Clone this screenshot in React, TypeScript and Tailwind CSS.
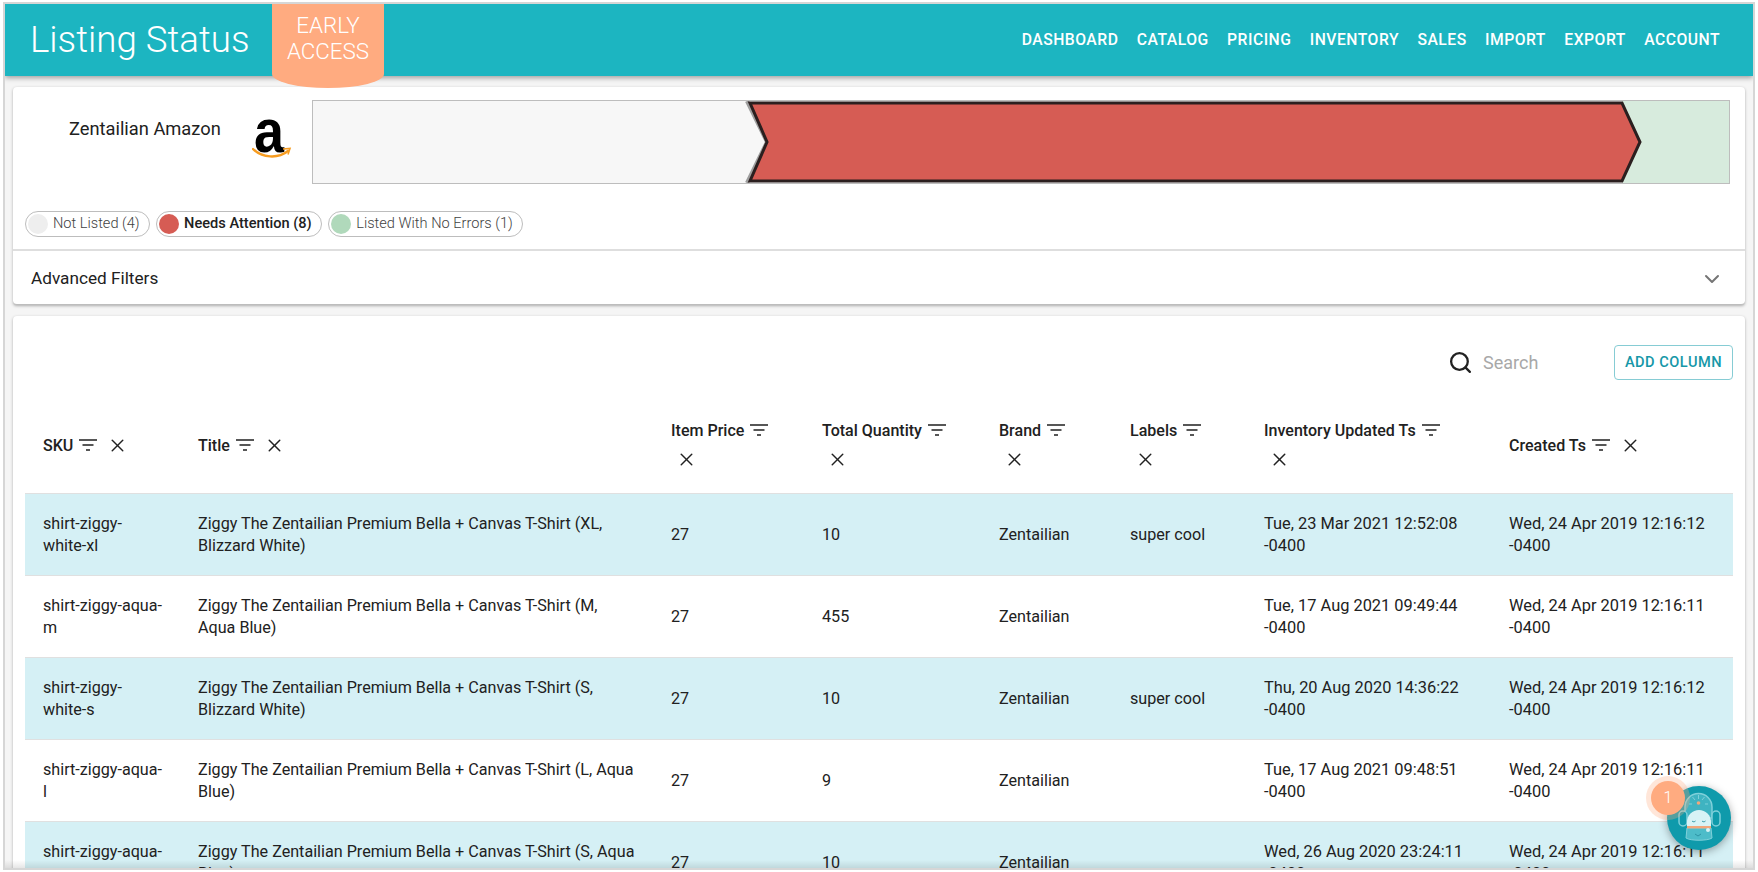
import React from 'react';
import { ChevronDown, Search, X } from 'lucide-react';

const navItems = ['Dashboard', 'Catalog', 'Pricing', 'Inventory', 'Sales', 'Import', 'Export', 'Account'];

const rows = [
    ['shirt-ziggy-white-xl', 'Ziggy The Zentailian Premium Bella + Canvas T-Shirt (XL, Blizzard White)', '27', '10', 'Zentailian', 'super cool', 'Tue, 23 Mar 2021 12:52:08 -0400', 'Wed, 24 Apr 2019 12:16:12 -0400'],
    ['shirt-ziggy-aqua-m', 'Ziggy The Zentailian Premium Bella + Canvas T-Shirt (M, Aqua Blue)', '27', '455', 'Zentailian', '', 'Tue, 17 Aug 2021 09:49:44 -0400', 'Wed, 24 Apr 2019 12:16:11 -0400'],
    ['shirt-ziggy-white-s', 'Ziggy The Zentailian Premium Bella + Canvas T-Shirt (S, Blizzard White)', '27', '10', 'Zentailian', 'super cool', 'Thu, 20 Aug 2020 14:36:22 -0400', 'Wed, 24 Apr 2019 12:16:12 -0400'],
    ['shirt-ziggy-aqua-l', 'Ziggy The Zentailian Premium Bella + Canvas T-Shirt (L, Aqua Blue)', '27', '9', 'Zentailian', '', 'Tue, 17 Aug 2021 09:48:51 -0400', 'Wed, 24 Apr 2019 12:16:11 -0400'],
    ['shirt-ziggy-aqua-s', 'Ziggy The Zentailian Premium Bella + Canvas T-Shirt (S, Aqua Blue)', '27', '10', 'Zentailian', '', 'Wed, 26 Aug 2020 23:24:11 -0400', 'Wed, 24 Apr 2019 12:16:11 -0400'],
];

const columns = ['SKU', 'Title', 'Item Price', 'Total Quantity', 'Brand', 'Labels', 'Inventory Updated Ts', 'Created Ts'];

const FilterIcon = () => (
    <svg width="18" height="12" viewBox="0 0 18 12" className="ml-[6px] mr-[5px] inline-block align-[0px] text-[#212121]">
        <path d="M0 1h18M3.500 6h11M7 11h4" stroke="currentColor" strokeWidth="1.7" fill="none" />
    </svg>
);

const HeaderCell = ({ label }: { label: string }) => (
    <th className="pb-[18px] pl-[18px] pr-[40px] text-left align-middle text-[16.050px] font-medium leading-[29px]">
        <span className="whitespace-nowrap">
            {label}
            <FilterIcon />
        </span>
        <X size={21} strokeWidth={1.7} className="ml-[5px] inline-block align-[-5px] text-[#212121]" />
    </th>
);

const Chip = ({ dot, label, bold }: { dot: string; label: string; bold?: boolean }) => (
    <div className="flex h-[26px] items-center rounded-full border border-[#bdbdbd] bg-white pl-[2px] pr-[9px]">
        <span className={`h-[20px] w-[20px] rounded-full ${dot}`}></span>
        <span className={`ml-[5px] text-[14.600px] ${bold ? 'font-medium text-[#212121]' : 'font-light text-[#424242]'}`}>{label}</span>
    </div>
);

const AmazonLogo = () => (
    <div className="relative mt-[20px] h-[40px] w-[40px] shrink-0">
        <span className="absolute left-[2px] top-[-21px] origin-left scale-x-[0.87] text-[62px] font-bold leading-[64px] text-black" style={{ fontFamily: '"Liberation Sans", sans-serif' }}>a</span>
        <svg viewBox="0 0 40 14" className="absolute left-0 top-[26px] h-[14px] w-[40px]">
            <path d="M1 3c9 9 25 10 35 2" stroke="#f79c20" strokeWidth="2.400" fill="none" strokeLinecap="round" />
            <path d="M31 3l7-.5-2 6" stroke="#f79c20" strokeWidth="1.600" fill="none" />
        </svg>
    </div>
);

const ChatBot = () => (
    <div className="absolute left-[1667px] top-[786px] h-[64px] w-[64px] rounded-full bg-[#0f9aab] shadow-[0_2px_8px_rgba(0,0,0,0.35)]">
        <svg viewBox="0 0 64 64" className="h-full w-full">
            <path d="M18 32V21a13.500 13.500 0 0 1 27 0v11z" fill="#3fb3c1" stroke="#7fd0da" strokeWidth="1.500" />
            <rect x="12" y="25" width="8" height="15" rx="4" fill="#0f9aab" stroke="#7fd0da" strokeWidth="1.500" />
            <rect x="45" y="25" width="8" height="15" rx="4" fill="#0f9aab" stroke="#7fd0da" strokeWidth="1.500" />
            <path d="M20 41v-5a12 12 0 0 1 24 0v5z" fill="#d8f3f6" />
            <path d="M20 42h24l1 10c-4 3-22 3-26 0z" fill="#4dbcc9" stroke="#7fd0da" strokeWidth="1" />
            <rect x="20" y="40" width="24" height="2.400" fill="#f2a67a" />
            <circle cx="31.500" cy="17" r="1.800" fill="#f2a67a" />
            <path d="M31.500 9v4M25.500 11l2.500 3M37.500 11l-2.500 3M22 18h3M38 18h3" stroke="#7fd0da" strokeWidth="1" />
            <path d="M25 35c1 1 2.500 1 3.500 0M35 35c1 1 2.500 1 3.500 0M28 48l3 2 3-2" stroke="#2d93a3" strokeWidth="1" fill="none" />
            <circle cx="41" cy="44" r="2" fill="#d8f3f6" />
        </svg>
        <div className="absolute left-[-16px] top-[-5px] flex h-[34px] w-[34px] items-center justify-center rounded-full bg-[#ffab80] text-[16px] font-light text-white ring-[5px] ring-[#ffab80]/30">1</div>
    </div>
);

export default function App() {
    return (
        <div className="relative h-[872px] w-[1758px] overflow-hidden bg-white text-[16.150px] text-[#212121]" style={{ fontFamily: 'Roboto, sans-serif' }}>
            <div className="relative mx-[3px] mb-[2px] mt-[2px] flex h-[868px] flex-col overflow-hidden border-[2px] border-[#d6d6d6] bg-[#f5f5f5]">
                <header className="relative z-10 flex h-[72px] shrink-0 items-center justify-between bg-[#1cb5c1] pl-[25px] pr-[33px] text-white shadow-[0_2px_5px_rgba(0,0,0,0.35)]">
                    <h1 className="text-[36.700px] font-light">Listing Status</h1>
                    <div className="absolute left-[267px] top-0 h-[84px] w-[112px] rounded-b-[56px_14px] bg-[#ffab80] pt-[8px] text-center text-[22.400px] font-light leading-[26px]">
                        EARLY<br />ACCESS
                    </div>
                    <nav className="flex items-center gap-[18.400px] text-[15.700px] font-medium uppercase tracking-[0.500px]">
                        {navItems.map((item) => <a key={item}>{item}</a>)}
                    </nav>
                </header>

                <section className="mx-[8px] mt-[11px] h-[218px] shrink-0 rounded-[4px] border-b border-[#bdbdbd] bg-white shadow-[0_1px_3px_rgba(0,0,0,0.3)]">
                    <div className="flex h-[164px] flex-col border-b-[2px] border-[#dedede]">
                        <div className="flex pt-[13px]">
                            <div className="w-[239px] shrink-0 pl-[56px] pt-[15px] text-[18.300px]">Zentailian Amazon</div>
                            <AmazonLogo />
                            <div className="ml-[20px] h-[84px] w-[1418px] border border-[#bdbdbd] bg-[#f7f7f7]">
                                <svg viewBox="0 0 1416 82" preserveAspectRatio="none" className="h-full w-full">
                                    <rect x="1309" y="0" width="107" height="82" fill="#d7ebdd" />
                                    <path d="M434 0L454 41L434 82" fill="none" stroke="#9e9e9e" strokeWidth="4" />
                                    <path d="M437 2H1309L1327 41L1309 80H437L454 41Z" fill="#d65c54" stroke="#2b1f1f" strokeWidth="3" />
                                </svg>
                            </div>
                        </div>
                        <div className="ml-[12px] mt-[27px] flex gap-[6.500px]">
                            <Chip dot="bg-[#eeeeee]" label="Not Listed (4)" />
                            <Chip dot="bg-[#d65c54]" label="Needs Attention (8)" bold />
                            <Chip dot="bg-[#b0d9bb]" label="Listed With No Errors (1)" />
                        </div>
                    </div>
                    <div className="flex h-[52px] items-center justify-between pl-[18px] pr-[21px] pt-[3px] text-[17.200px]">
                        <span>Advanced Filters</span>
                        <ChevronDown size={24} className="text-[#757575]" />
                    </div>
                </section>

                <section className="mx-[8px] mt-[11px] flex-1 rounded-[4px] bg-white px-[12px] shadow-[0_1px_3px_rgba(0,0,0,0.3)]">
                    <div className="flex h-[100px] items-start justify-end pt-[29px]">
                        <div className="mr-[71px] mt-[4px] flex items-center">
                            <Search size={25} strokeWidth={2.200} className="mr-[10px] text-[#212121]" />
                            <span className="w-[60px] text-[18px] text-[#a8a8a8]">Search</span>
                        </div>
                        <button className="h-[35px] w-[119px] rounded-[4px] border border-[#86ccd4] text-[14.600px] font-medium tracking-[0.500px] text-[#1697a8]">ADD COLUMN</button>
                    </div>
                    <table className="w-[1708px] table-fixed border-collapse">
                        <colgroup>
                            <col className="w-[155px]" />
                            <col className="w-[473px]" />
                            <col className="w-[151px]" />
                            <col className="w-[177px]" />
                            <col className="w-[131px]" />
                            <col className="w-[134px]" />
                            <col className="w-[245px]" />
                            <col className="w-[242px]" />
                        </colgroup>
                        <thead>
                            <tr className="h-[77px]">
                                {columns.map((c) => <HeaderCell key={c} label={c} />)}
                            </tr>
                        </thead>
                        <tbody>
                            {rows.map((row, i) => (
                                <tr key={row[0]} className={`h-[82px] border-y border-[#e0e0e0] ${i % 2 === 0 ? 'bg-[#d5f0f5]' : 'bg-white'}`}>
                                    {row.map((cell, j) => (
                                        <td key={j} className={`pl-[18px] pt-[2px] align-middle leading-[22.400px] ${j === 0 ? 'pr-[16px]' : 'pr-[18px]'} ${j >= 6 ? 'text-[16.400px]' : ''}`}>{cell}</td>
                                    ))}
                                </tr>
                            ))}
                        </tbody>
                    </table>
                </section>
                <div className="absolute inset-x-0 bottom-0 h-[8px] bg-gradient-to-b from-transparent to-black/10"></div>
            </div>
            <ChatBot />
        </div>
    );
}
